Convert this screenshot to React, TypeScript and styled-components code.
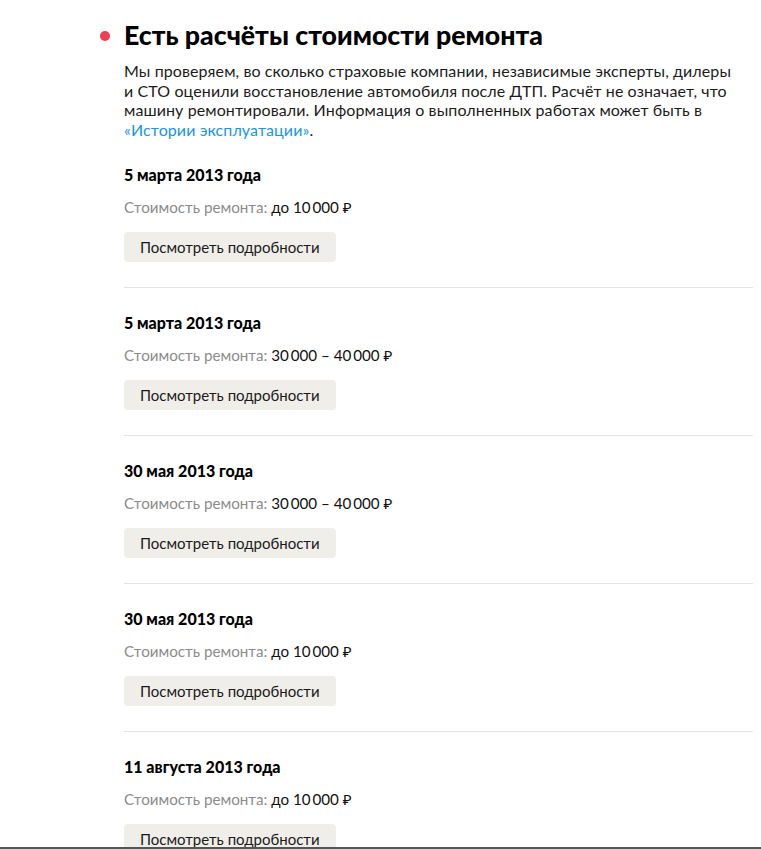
import React from "react";
import styled, { createGlobalStyle } from "styled-components";

const Global = createGlobalStyle`
  html, body { margin: 0; padding: 0; background: #fff; }
  body { font-family: Lato, "Noto Sans", sans-serif; color: #1a1a1a; }
`;

const Page = styled.div`
  padding: 18px 8px 0 124px;
  width: 629px;
`;

const TitleRow = styled.div`
  display: flex;
  align-items: center;
  gap: 14px;
  margin-left: -24px;
`;

const Dot = styled.span`
  width: 10px;
  height: 10px;
  border-radius: 50%;
  background: #f23c52;
  flex: none;
  margin-top: 1px;
`;

const Title = styled.h2`
  margin: 0;
  font-family: Lato, sans-serif;
  font-weight: 900;
  font-size: 26.7px;
  line-height: 34px;
  color: #000;
`;

const Lead = styled.p`
  margin: 9px 0 1px;
  font-size: 16px;
  letter-spacing: 0.1px;
  line-height: 19.5px;
  color: #1c1c1c;
`;

const Link = styled.a`
  color: #1a95e8;
  text-decoration: none;
`;

const Item = styled.section`
  padding: 25px 0;
  border-bottom: 1px solid #e3e3e3;
  &:last-child { border-bottom: none; }
`;

const DateText = styled.div`
  font-weight: 900;
  font-size: 16px;
  line-height: 20px;
  color: #000;
`;

const Cost = styled.div`
  margin-top: 12px;
  font-size: 15.2px;
  line-height: 20px;
  color: #8c8c8c;
`;

const CostValue = styled.span`
  color: #111;
`;

const Button = styled.button`
  margin-top: 15px;
  height: 30px;
  padding: 0 16px;
  border: none;
  border-radius: 4px;
  background: #f0eee9;
  font-family: Lato, sans-serif;
  font-size: 15px;
  color: #1a1a1a;
  cursor: pointer;
`;

const BottomEdge = styled.div`
  position: fixed;
  left: 0;
  right: 0;
  bottom: 0;
  height: 2px;
  background: #555;
`;

const items = [
  { date: "5 марта 2013 года", cost: "до 10\u2009000\u00a0₽" },
  { date: "5 марта 2013 года", cost: "30\u2009000 – 40\u2009000\u00a0₽" },
  { date: "30 мая 2013 года", cost: "30\u2009000 – 40\u2009000\u00a0₽" },
  { date: "30 мая 2013 года", cost: "до 10\u2009000\u00a0₽" },
  { date: "11 августа 2013 года", cost: "до 10\u2009000\u00a0₽" },
];

export default function App() {
  return (
    <>
      <Global />
      <Page>
        <TitleRow>
          <Dot />
          <Title>Есть расчёты стоимости ремонта</Title>
        </TitleRow>
        <Lead>
          Мы проверяем, во сколько страховые компании, независимые эксперты, дилеры
          <br />
          и СТО оценили восстановление автомобиля после ДТП. Расчёт не означает, что
          <br />
          машину ремонтировали. Информация о выполненных работах может быть в
          <br />
          <Link href="#">«Истории эксплуатации»</Link>.
        </Lead>
        {items.map((it, i) => (
          <Item key={i}>
            <DateText>{it.date}</DateText>
            <Cost>
              Стоимость ремонта: <CostValue>{it.cost}</CostValue>
            </Cost>
            <Button>Посмотреть подробности</Button>
          </Item>
        ))}
      </Page>
      <BottomEdge />
    </>
  );
}
